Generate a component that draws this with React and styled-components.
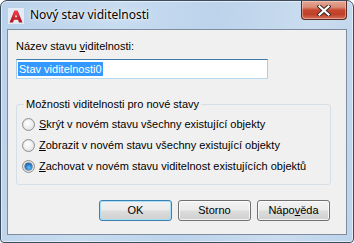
import React from 'react';
import styled, { createGlobalStyle } from 'styled-components';

const Global = createGlobalStyle`
  html, body { margin: 0; padding: 0; background: #ffffff; }
  body { width: 354px; height: 243px; overflow: hidden; }
  * { box-sizing: border-box; }
`;

const Window = styled.div`
  width: 354px;
  height: 243px;
  border: 1px solid #3b4c5e;
  border-radius: 7px 7px 4px 4px;
  background: linear-gradient(100deg, #b9d1ea 0%, #c8dcf0 30%, #bcd3eb 55%, #cadcef 80%, #bdd4ec 100%);
  box-shadow: inset 0 0 0 1px rgba(255, 255, 255, 0.55);
  display: flex;
  flex-direction: column;
  padding: 0 6px 7px 6px;
  font-family: "Liberation Sans", Arial, sans-serif;
  overflow: hidden;
`;

const TitleBar = styled.div`
  height: 28px;
  display: flex;
  align-items: flex-start;
`;

const AppIcon = styled.svg`
  width: 16px;
  height: 16px;
  margin: 7px 0 0 1px;
  flex: none;
`;

const Title = styled.div`
  margin: 6px 0 0 6px;
  font-family: "Noto Sans", "Open Sans", sans-serif;
  font-size: 12px;
  line-height: 16px;
  color: #000;
  text-shadow: 0 0 6px rgba(255, 255, 255, 0.95), 0 0 2px rgba(255, 255, 255, 0.9);
`;

const CloseButton = styled.div`
  margin-left: auto;
  margin-right: 0px;
  width: 46px;
  height: 19px;
  border: 1px solid #5a2b22;
  border-top: none;
  border-radius: 0 0 4px 4px;
  background: linear-gradient(180deg, #e6a896 0%, #d98a75 35%, #c6472f 50%, #c0412a 75%, #d3705a 100%);
  box-shadow: inset 0 0 0 1px rgba(255, 220, 210, 0.45);
  display: flex;
  align-items: center;
  justify-content: center;
`;

const Client = styled.div`
  flex: 1;
  background: #f0f0f0;
  border: 1px solid #7d8d9f;
  padding: 10px 15px 0 8px;
  display: flex;
  flex-direction: column;
  font-size: 11px;
  line-height: 13px;
  color: #000;
`;

const Label = styled.div`
  height: 13px;
`;

const Key = styled.span`
  text-decoration: underline;
  text-underline-offset: 1px;
`;

const TextBox = styled.div`
  margin-top: 6px;
  width: 252px;
  height: 20px;
  background: #fff;
  border: 1px solid #abcbe6;
  border-top-color: #3d7bad;
  border-bottom-color: #b7d9ed;
  padding: 2px 0 0 1px;
  display: flex;
`;

const Selected = styled.span`
  background: #3399ff;
  color: #fff;
  height: 14px;
  line-height: 14px;
  padding: 0 1px;
`;

const Group = styled.fieldset`
  margin: 19px 0 0 0;
  padding: 0 0 7px 0;
  border: 1px solid #d5dfe5;
  border-radius: 3px;
  min-width: 0;
`;

const Legend = styled.legend`
  margin-left: 7px;
  padding: 0 2px;
  line-height: 13px;
`;

const Options = styled.div`
  padding-top: 3px;
  display: flex;
  flex-direction: column;
`;

const Option = styled.div`
  height: 21px;
  display: flex;
  align-items: center;
  padding-left: 5px;
  gap: 4px;
`;

const Radio = styled.span`
  width: 13px;
  height: 13px;
  border-radius: 50%;
  flex: none;
  border: 1px solid #8f8f8f;
  background: radial-gradient(circle at 40% 35%, #ffffff 0%, #f2f2f2 45%, #d6d6d6 100%);
  box-shadow: inset 0 0 0 1px #e4e4e4;
  display: flex;
  align-items: center;
  justify-content: center;

  &::after {
    content: "";
    display: ${(p) => (p.$checked ? 'block' : 'none')};
    width: 7px;
    height: 7px;
    border-radius: 50%;
    background: radial-gradient(circle at 55% 65%, #6cc6f7 0%, #2f8ad6 40%, #194d8a 85%);
    box-shadow: 0 0 0 0.5px #1b3f6e;
  }
`;

const ButtonRow = styled.div`
  margin-top: 15px;
  display: flex;
  justify-content: flex-end;
  gap: 6px;
  padding-right: 1px;
`;

const Button = styled.div`
  width: 73px;
  height: 21px;
  border: 1px solid ${(p) => (p.$default ? '#3c7fb1' : '#707070')};
  border-radius: 3px;
  background: linear-gradient(180deg, #f2f2f2 0%, #ebebeb 48%, #dddddd 52%, #cfcfcf 100%);
  box-shadow: inset 0 0 0 1px ${(p) => (p.$default ? '#a7e0f6' : 'rgba(255,255,255,0.75)')};
  display: flex;
  align-items: center;
  justify-content: center;
  line-height: 13px;
`;

const CloseGlyph = () => (
  <svg width="14" height="11" viewBox="0 0 14 11">
    <path d="M2.5 1.5 L11.5 9.5 M11.5 1.5 L2.5 9.5" stroke="#3d2a26" strokeWidth="4.2" strokeLinecap="square" />
    <path d="M2.5 1.5 L11.5 9.5 M11.5 1.5 L2.5 9.5" stroke="#ffffff" strokeWidth="2.2" strokeLinecap="square" />
  </svg>
);

const Logo = () => (
  <AppIcon viewBox="0 0 16 16">
    <defs>
      <linearGradient id="ag" x1="0" y1="0" x2="0" y2="1">
        <stop offset="0" stopColor="#f0404a" />
        <stop offset="1" stopColor="#b3121c" />
      </linearGradient>
    </defs>
    <rect x="0" y="0" width="16" height="16" fill="#f4f7fb" opacity="0.7" />
    <path d="M6.3 2.5 H9.7 L14.5 14.5 H11 L10 11.8 H6 L5 14.5 H1.5 Z M6.9 9.3 H9.1 L8 6.2 Z" fill="url(#ag)" fillRule="evenodd" />
  </AppIcon>
);

export default function App() {
  return (
    <>
      <Global />
      <Window>
        <TitleBar>
          <Logo />
          <Title>Nový stav viditelnosti</Title>
          <CloseButton>
            <CloseGlyph />
          </CloseButton>
        </TitleBar>
        <Client>
          <Label>Název stavu <Key>v</Key>iditelnosti:</Label>
          <TextBox>
            <Selected>Stav viditelnosti0</Selected>
          </TextBox>
          <Group>
            <Legend>Možnosti viditelnosti pro nové stavy</Legend>
            <Options>
              <Option>
                <Radio />
                <span><Key>S</Key>krýt v novém stavu všechny existující objekty</span>
              </Option>
              <Option>
                <Radio />
                <span><Key>Z</Key>obrazit v novém stavu všechny existující objekty</span>
              </Option>
              <Option>
                <Radio $checked />
                <span><Key>Z</Key>achovat v novém stavu viditelnost existujících objektů</span>
              </Option>
            </Options>
          </Group>
          <ButtonRow>
            <Button $default>OK</Button>
            <Button>Storno</Button>
            <Button>Nápo<Key>v</Key>ěda</Button>
          </ButtonRow>
        </Client>
      </Window>
    </>
  );
}
